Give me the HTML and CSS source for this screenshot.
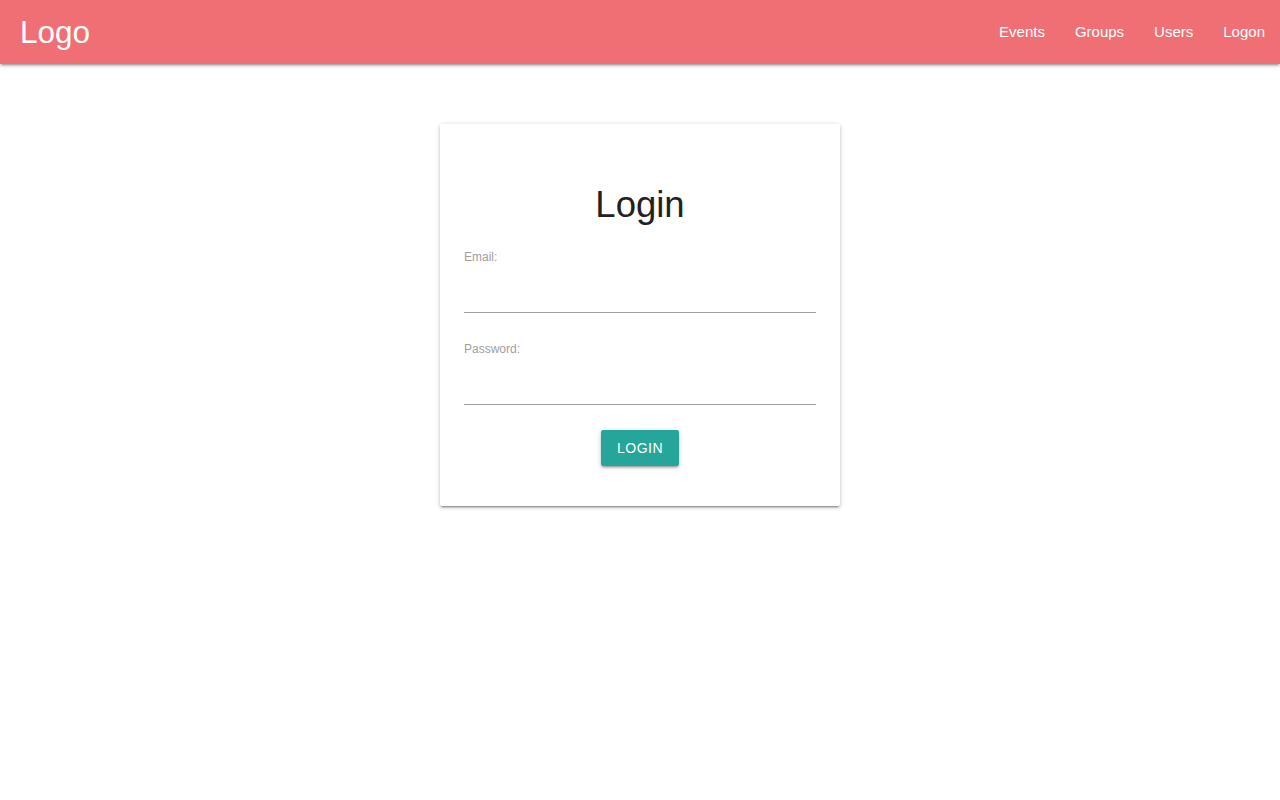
FILE: index.html
```html
<!DOCTYPE html>
<html lang="en">
<head>
<meta charset="utf-8">
<title>Login</title>
<link rel="stylesheet" href="styles.css">
</head>
<body>
<nav class="nav">
  <a class="brand" href="#">Logo</a>
  <ul class="nav-links">
    <li><a href="#">Events</a></li>
    <li><a href="#">Groups</a></li>
    <li><a href="#">Users</a></li>
    <li><a href="#">Logon</a></li>
  </ul>
</nav>
<main class="main">
  <form class="card">
    <h1 class="title">Login</h1>
    <label class="label" for="email">Email:</label>
    <input class="input" id="email" type="email">
    <label class="label label-next" for="password">Password:</label>
    <input class="input" id="password" type="password">
    <div class="actions">
      <button class="btn" type="button">Login</button>
    </div>
  </form>
</main>
</body>
</html>
```

FILE: styles.css
```css
* { box-sizing: border-box; }
html, body { margin: 0; padding: 0; }
body {
  font-family: "Liberation Sans", Arial, sans-serif;
  background: #fff;
  color: rgba(0,0,0,0.87);
}
.nav {
  height: 64px;
  background: #ef6f74;
  display: flex;
  align-items: center;
  justify-content: space-between;
  box-shadow: 0 2px 2px 0 rgba(0,0,0,0.14), 0 3px 1px -2px rgba(0,0,0,0.12), 0 1px 5px 0 rgba(0,0,0,0.2);
  position: relative;
  z-index: 1;
}
.brand {
  color: #fff;
  text-decoration: none;
  font-size: 31.5px;
  padding-left: 20px;
  line-height: 64px;
}
.nav-links {
  list-style: none;
  margin: 0;
  padding: 0;
  display: flex;
}
.nav-links a {
  display: block;
  padding: 0 15px;
  line-height: 64px;
  color: #fff;
  text-decoration: none;
  font-size: 15px;
}
.main {
  display: flex;
  justify-content: center;
  padding-top: 60px;
  padding-bottom: 20px;
}
.card {
  width: 400px;
  background: #fff;
  padding: 24px 24px 40px;
  border-radius: 2px;
  box-shadow: 0 2px 2px 0 rgba(0,0,0,0.14), 0 3px 1px -2px rgba(0,0,0,0.2), 0 1px 5px 0 rgba(0,0,0,0.2);
  display: flex;
  flex-direction: column;
}
.title {
  font-weight: 400;
  font-size: 36.5px;
  line-height: 48px;
  margin: 33px 0 21px;
  text-align: center;
  color: #212121;
}
.label {
  font-size: 12px;
  line-height: 14px;
  color: #9e9e9e;
}
.label-next { margin-top: 29px; }
.input {
  height: 49px;
  border: none;
  border-bottom: 1px solid #9e9e9e;
  background: transparent;
  outline: none;
  font-size: 16px;
  padding: 0;
  width: 100%;
}
.actions {
  display: flex;
  justify-content: center;
  margin-top: 25px;
}
.btn {
  height: 36px;
  padding: 0 16px;
  border: none;
  border-radius: 2px;
  background: #26a69a;
  color: #fff;
  font-family: "Liberation Sans", Arial, sans-serif;
  font-size: 14px;
  letter-spacing: 0.5px;
  text-transform: uppercase;
  box-shadow: 0 2px 2px 0 rgba(0,0,0,0.14), 0 3px 1px -2px rgba(0,0,0,0.12), 0 1px 5px 0 rgba(0,0,0,0.2);
  cursor: pointer;
}
```
